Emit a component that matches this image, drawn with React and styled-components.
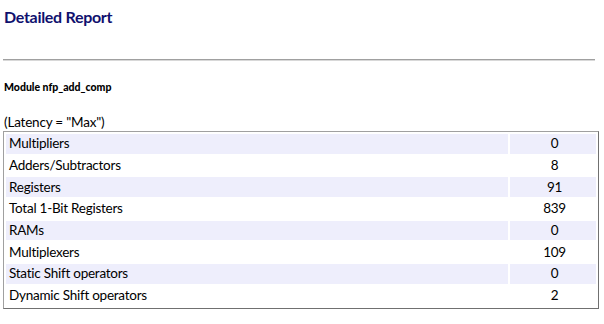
import React from "react";
import styled, { createGlobalStyle } from "styled-components";

const Global = createGlobalStyle`
  html, body { margin: 0; padding: 0; background: #fff; }
  body { font-family: Lato, "Open Sans", sans-serif; color: #000; }
`;

const Page = styled.div`
  padding: 3px 3px 0 3px;
  width: 598px;
  box-sizing: border-box;
`;

const Title = styled.h1`
  margin: 4px 0 0 1px;
  font-size: 16px;
  font-weight: bold;
  color: #10106e;
  line-height: 20px;
  letter-spacing: -0.3px;
`;

const Rule = styled.hr`
  margin: 32px 0 0 0;
  border: 0;
  border-top: 1px solid #a0a0a0;
  border-bottom: 1px solid #d8d8d8;
  height: 0;
`;

const Module = styled.h3`
  margin: 20px 0 0 1px;
  font-size: 10.5px;
  font-weight: 900;
  line-height: 12px;
`;

const Caption = styled.div`
  margin: 22px 0 0 1px;
  font-size: 13.5px;
  line-height: 15px;
  letter-spacing: -0.2px;
`;

const Table = styled.table`
  margin-top: 1px;
  width: 596px;
  border-collapse: separate;
  border-spacing: 2px;
  border: 1px solid;
  border-color: #a0a0a0 #707070 #707070 #a0a0a0;
  font-size: 13.5px;
`;

const Row = styled.tr`
  background: ${(p) => (p.$alt ? "#eeeefc" : "#fff")};
`;

const Cell = styled.td`
  height: 19.7px;
  padding: 0 0 0 3px;
  line-height: 19px;
  letter-spacing: -0.25px;
  text-align: ${(p) => (p.$num ? "center" : "left")};
  width: ${(p) => (p.$num ? "83px" : "auto")};
`;

const rows = [
  ["Multipliers", "0"],
  ["Adders/Subtractors", "8"],
  ["Registers", "91"],
  ["Total 1-Bit Registers", "839"],
  ["RAMs", "0"],
  ["Multiplexers", "109"],
  ["Static Shift operators", "0"],
  ["Dynamic Shift operators", "2"],
];

export default function App() {
  return (
    <>
      <Global />
      <Page>
        <Title>Detailed Report</Title>
        <Rule />
        <Module>Module nfp_add_comp</Module>
        <Caption>(Latency = "Max")</Caption>
        <Table>
          <tbody>
            {rows.map(([k, v], i) => (
              <Row key={k} $alt={i % 2 === 0}>
                <Cell>{k}</Cell>
                <Cell $num>{v}</Cell>
              </Row>
            ))}
          </tbody>
        </Table>
      </Page>
    </>
  );
}
